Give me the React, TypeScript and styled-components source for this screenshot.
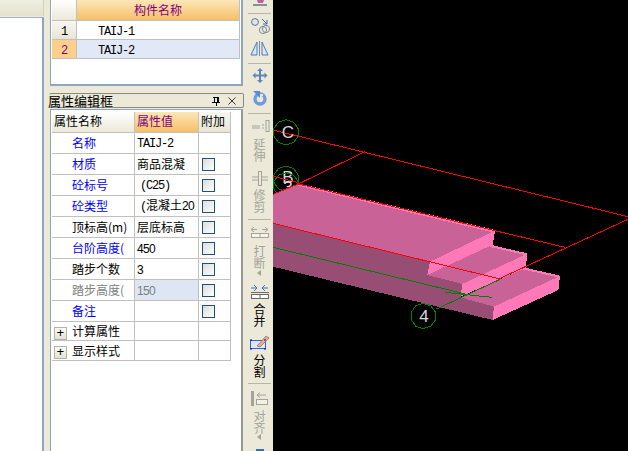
import React from "react";
import styled, { createGlobalStyle } from "styled-components";

const Global = createGlobalStyle`
  html, body { margin: 0; padding: 0; background: #000; overflow: hidden; }
  #root { width: 628px; height: 451px; }
`;

const CJK = `"Noto Sans CJK SC", "Liberation Sans", sans-serif`;
const MONO = `"Liberation Mono", "Noto Sans CJK SC", monospace`;

const Root = styled.div`
  display: flex;
  width: 628px;
  height: 451px;
  overflow: hidden;
  background: #ece9d8;
  font: 12px/14px ${CJK};
  color: #000;
`;

/* left drawer */
const LeftCol = styled.div`
  width: 44px;
  flex: none;
  display: flex;
  flex-direction: column;
`;
const LeftHead = styled.div`
  height: 16px;
  flex: none;
  background: linear-gradient(#f0eee0, #e4e1cd);
  border-right: 1px solid #d4d0bc;
`;
const LeftBody = styled.div`
  flex: 1;
  margin-top: 1px;
  background: #fff;
  border-top: 1px solid #9db3cc;
  border-right: 2px solid #8ea6c2;
`;

/* middle column */
const MiddleCol = styled.div`
  width: 203px;
  flex: none;
  padding-left: 6px;
  box-sizing: border-box;
  display: flex;
  flex-direction: column;
`;
const Panel = styled.div`
  width: 193px;
  box-sizing: border-box;
  background: #fff;
  border-left: 1px solid #8ea6c2;
  border-right: 2px solid #8ea6c2;
  padding-left: 1px;
`;
const TopPanel = styled(Panel)`
  height: 86px;
  flex: none;
  border-bottom: 2px solid #8ea6c2;
`;
const PropPanel = styled(Panel)`
  flex: 1;
  margin-top: 1px;
  border-top: 1px solid #8ea6c2;
  padding-top: 2px;
  border-right-color: #9a9a92;
`;
const TitleBar = styled.div`
  height: 13px;
  width: 194px;
  margin: 7px 0 0 -1px;
  border: 1px solid #8a8a80;
  border-left: none;
  border-radius: 2px;
  display: flex;
  align-items: center;
  font-size: 13px;
  line-height: 13px;
  color: #000;
  background: #ece9d8;
  white-space: nowrap;
`;
const TitleText = styled.span`
  flex: 1;
  margin-left: -1px;
`;
const TitleIcon = styled.svg`
  display: block;
  flex: none;
  width: 10px;
  height: 10px;
  margin-right: 6px;
`;

const Grid = styled.table<{ $w: number }>`
  border-collapse: separate;
  border-spacing: 0;
  table-layout: fixed;
  width: ${(p) => p.$w}px;
`;
const Td = styled.td<{ $h?: number; $bg?: string; $pad?: number; $color?: string; $w?: number; $pt?: number; $pb?: number }>`
  box-sizing: border-box;
  padding: ${(p) => p.$pt ?? 0}px 0 ${(p) => p.$pb ?? 1}px ${(p) => p.$pad ?? 2}px;
  height: ${(p) => p.$h ?? 21}px;
  ${(p) => (p.$w ? `width: ${p.$w}px;` : "")}
  background: ${(p) => p.$bg ?? "#fff"};
  color: ${(p) => p.$color ?? "#000"};
  border-right: 1px solid #c0c0c0;
  border-bottom: 1px solid #c0c0c0;
  white-space: nowrap;
  overflow: hidden;
  vertical-align: middle;
  line-height: 14px;
`;
const Mono = styled.span`
  font-family: ${MONO};
  font-size: 12px;
  letter-spacing: -1.2px;
`;
const Digits = styled.span`
  font-family: "Liberation Sans", sans-serif;
  font-size: 12px;
  letter-spacing: -0.67px;
`;
const Nudge = styled.span`
  padding-left: 3px;
`;
const Check = styled.span`
  display: block;
  width: 13px;
  height: 13px;
  box-sizing: border-box;
  margin-left: 1px;
  border: 1px solid #1c5180;
  background: linear-gradient(135deg, #dcdcd7, #ffffff);
`;
const Plus = styled.span`
  display: inline-flex;
  align-items: center;
  justify-content: center;
  width: 13px;
  height: 13px;
  box-sizing: border-box;
  border: 1px solid #b4b4ae;
  background: linear-gradient(#fbfbf8, #e4e2d4);
  margin: 0 5px 0 2px;
  vertical-align: middle;
  font: 13px/11px "Liberation Mono", monospace;
`;
const Indent = styled.span`
  padding-left: 18px;
`;

/* toolbar */
const Toolbar = styled.div`
  width: 26px;
  flex: none;
  box-sizing: border-box;
  display: flex;
  flex-direction: column;
  align-items: center;
  background: #ece9d8;
  padding-right: 1px;
`;
const Sep = styled.div<{ $mt: number }>`
  width: 23px;
  height: 1px;
  flex: none;
  margin-top: ${(p) => p.$mt}px;
  background: #b8b6a6;
`;
const Ico = styled.svg<{ $mt: number; $h: number }>`
  display: block;
  flex: none;
  width: 24px;
  height: ${(p) => p.$h}px;
  margin-top: ${(p) => p.$mt}px;
`;
const VLabel = styled.div<{ $mt: number; $off?: boolean }>`
  flex: none;
  width: 12px;
  height: 24px;
  word-break: break-all;
  margin-top: ${(p) => p.$mt}px;
  font-size: 12px;
  line-height: 12px;
  color: ${(p) => (p.$off ? "#a4a39a" : "#000")};
`;

/* scene */
const Scene = styled.div`
  flex: 1;
  background: #000;
  min-width: 0;
`;
const SceneSvg = styled.svg`
  display: block;
  width: 355px;
  height: 451px;
`;
const Bubble = styled.text`
  font: 17px "Liberation Sans", sans-serif;
  fill: #d8d8d8;
  text-anchor: middle;
`;

const ORANGE = "linear-gradient(#fde6b8, #f4c066)";
const BEIGE = "linear-gradient(#ffffff, #ece9d8)";
const BEIGE2 = "linear-gradient(#f8f7f0, #e8e5d4)";
const BLUE = "#0000ff";

const rows: { n: string; c: string; v: React.ReactNode; chk: boolean; bg?: string; vc?: string }[] = [
  { n: "名称", c: BLUE, v: <Mono>TAIJ-2</Mono>, chk: false },
  { n: "材质", c: BLUE, v: "商品混凝", chk: true },
  { n: "砼标号", c: BLUE, v: <Nudge><Mono>(C25)</Mono></Nudge>, chk: true },
  { n: "砼类型", c: BLUE, v: <Nudge><Mono>(</Mono>混凝土<Digits>20</Digits></Nudge>, chk: true },
  { n: "顶标高(m)", c: "#000", v: "层底标高", chk: true },
  { n: "台阶高度(", c: BLUE, v: <Digits>450</Digits>, chk: true },
  { n: "踏步个数", c: "#000", v: <Digits>3</Digits>, chk: true },
  { n: "踏步高度(", c: "#808080", v: <Digits>150</Digits>, chk: true, bg: "#dde6f2", vc: "#808080" },
  { n: "备注", c: BLUE, v: "", chk: true },
];

const Oct = ({ cx, cy }: { cx: number; cy: number }) => {
  const r = 38;
  const pts = Array.from({ length: 10 }, (_, i) => {
    const a = (i * Math.PI) / 5 + Math.PI / 10;
    return `${cx + r * Math.cos(a)},${cy + r * Math.sin(a)}`;
  }).join(" ");
  return <polygon points={pts} fill="none" stroke="#008000" strokeWidth={1} vectorEffect="non-scaling-stroke" />;
};

const Line = ({ d, c }: { d: string; c: string }) => (
  <path d={d} fill="none" stroke={c} strokeWidth={1} vectorEffect="non-scaling-stroke" />
);

const D = "#a4a39a";

export default function App() {
  return (
    <Root>
      <Global />
      <LeftCol>
        <LeftHead />
        <LeftBody />
      </LeftCol>
      <MiddleCol>
        <TopPanel>
          <Grid $w={188}>
            <tbody>
              <tr>
                <Td $w={25} $h={21} $bg={BEIGE} />
                <Td $h={21} $bg={ORANGE} $color="#800080" $pad={57}>构件名称</Td>
              </tr>
              <tr>
                <Td $h={19} $bg={BEIGE2} $pad={9} $pt={1} $pb={0}><Mono>1</Mono></Td>
                <Td $h={19} $pad={21} $pt={1} $pb={0}><Mono>TAIJ-1</Mono></Td>
              </tr>
              <tr>
                <Td $h={19} $bg="#fdd08a" $pad={9} $color="#800080" $pt={1} $pb={0}><Mono>2</Mono></Td>
                <Td $h={19} $bg="#e0e9f5" $pad={21} $pt={1} $pb={0}><Mono>TAIJ-2</Mono></Td>
              </tr>
            </tbody>
          </Grid>
        </TopPanel>
        <TitleBar>
          <TitleText>属性编辑框</TitleText>
          <TitleIcon viewBox="0 0 10 10">
            <path d="M2 1h6M3 1v5M6 1v5M7 1v5M1 6h8M5 6v4" stroke="#000" strokeWidth="1" fill="none" shapeRendering="crispEdges" />
          </TitleIcon>
          <TitleIcon viewBox="0 0 10 10">
            <path d="M1.5 1.5l7 7M8.5 1.5l-7 7" stroke="#222" strokeWidth="0.9" fill="none" />
          </TitleIcon>
        </TitleBar>
        <PropPanel>
          <Grid $w={179}>
            <tbody>
              <tr>
                <Td $w={83} $bg={BEIGE} $pb={3}>属性名称</Td>
                <Td $w={64} $bg={ORANGE} $color="#800080" $pb={3}>属性值</Td>
                <Td $w={32} $bg={BEIGE2} $pb={3}>附加</Td>
              </tr>
              {rows.map((r) => (
                <tr key={r.n}>
                  <Td $color={r.c} $pb={0}><Indent>{r.n}</Indent></Td>
                  <Td $bg={r.bg} $color={r.vc} $pb={0}>{r.v}</Td>
                  <Td $pt={1} $pb={0}>{r.chk && <Check />}</Td>
                </tr>
              ))}
              <tr>
                <Td $h={19} $pad={0} $pt={2} $pb={0}><Plus>+</Plus>计算属性</Td>
                <Td $h={19} />
                <Td $h={19} />
              </tr>
              <tr>
                <Td $h={20} $pad={0} $pt={2} $pb={0}><Plus>+</Plus>显示样式</Td>
                <Td $h={20} />
                <Td $h={20} />
              </tr>
            </tbody>
          </Grid>
        </PropPanel>
      </MiddleCol>
      <Toolbar>
        <Ico $mt={0} $h={6} viewBox="0 0 24 6">
          <path d="M9 0h7l-1 3h-5z" fill="#c0609a" />
          <path d="M5 5h14" stroke="#5a6a8a" strokeWidth="1.4" />
        </Ico>
        <Sep $mt={7} />
        <Ico $mt={3} $h={18} viewBox="0 0 24 18">
          <circle cx="7" cy="5" r="3.4" fill="#dfe6f0" stroke="#5b7394" />
          <path d="M14 2l5 5M19 3v4h-4" stroke="#3b6fb8" fill="none" />
          <circle cx="15" cy="13" r="3.6" fill="none" stroke="#7d8a9c" />
          <circle cx="18" cy="12" r="3.6" fill="none" stroke="#7d8a9c" />
        </Ico>
        <Ico $mt={6} $h={15} viewBox="0 0 24 15">
          <path d="M9 1L3 14h6zM14 1l6 13h-6z" fill="#dbe6f4" stroke="#4f7cc0" />
          <path d="M11.5 0v15" stroke="#7a8aa0" />
        </Ico>
        <Sep $mt={7} />
        <Ico $mt={4} $h={15} viewBox="0 0 24 15">
          <path d="M12 0l3 3h-2v3.500h3.500v-2l3 3-3 3v-2H13V12h2l-3 3-3-3h2V8.500H7.500v2l-3-3 3-3v2H11V3H9z" fill="#5f86b8" />
        </Ico>
        <Ico $mt={8} $h={15} viewBox="0 0 24 15">
          <circle cx="12" cy="8" r="5" fill="none" stroke="#6f9ae0" strokeWidth="3.4" />
          <path d="M5 0h7v7z" fill="#5b8bd8" />
          <path d="M12 5h3v-2h-3z" fill="#ece9d8" />
        </Ico>
        <Sep $mt={7} />
        <Ico $mt={6} $h={12} viewBox="0 0 24 12">
          <path d="M4 6h8M4 8h8M14 5h2M14 8h2" stroke={D} fill="none" />
          <rect x="18" y="0.500" width="3" height="11" fill="#ece9d8" stroke={D} />
        </Ico>
        <VLabel $mt={6} $off>延伸</VLabel>
        <Ico $mt={9} $h={15} viewBox="0 0 24 15">
          <path d="M4 6h16M4 9h16" stroke={D} fill="none" />
          <rect x="10.500" y="0.500" width="3" height="14" fill="#ece9d8" stroke={D} />
        </Ico>
        <VLabel $mt={3} $off>修剪</VLabel>
        <Sep $mt={6} />
        <Ico $mt={7} $h={11} viewBox="0 0 24 11">
          <path d="M3 2.500h6M6 0l-3 2.500 3 2.500M20 2.500h-6M17 0l3 2.500-3 2.500" stroke={D} fill="none" />
          <rect x="3.500" y="6.500" width="17" height="4" fill="#f6f5ec" stroke={D} />
          <path d="M12 6v5" stroke={D} />
        </Ico>
        <VLabel $mt={7} $off>打断</VLabel>
        <Ico $mt={1} $h={6} viewBox="0 0 24 6">
          <path d="M9 3l4-3v6z" fill={D} />
        </Ico>
        <Ico $mt={9} $h={14} viewBox="0 0 24 14">
          <path d="M3 3h6M6 0l3 3-3 3M20 3h-6M17 0l-3 3 3 3" stroke="#3b6fd0" fill="none" />
          <path d="M3 7.500h18" stroke="#6a6a6a" />
          <rect x="3.500" y="9.500" width="17" height="4" fill="#fff" stroke="#6a6a6a" />
          <path d="M12 9v5" stroke="#6a6a6a" />
        </Ico>
        <VLabel $mt={4}>合并</VLabel>
        <Ico $mt={7} $h={16} viewBox="0 0 24 16">
          <rect x="2.500" y="6.500" width="15" height="8" fill="#dfe8fa" stroke="#3060e0" />
          <path d="M9 12l9-10 3 2-9 9z" fill="#e8b090" stroke="#8a6a50" strokeWidth="0.7" />
          <path d="M2 15h2M16 6h2M2 6h2M16 15h2" stroke="#0000e0" />
        </Ico>
        <VLabel $mt={4}>分割</VLabel>
        <Sep $mt={5} />
        <Ico $mt={7} $h={15} viewBox="0 0 24 15">
          <rect x="3" y="0" width="3" height="15" fill={D} />
          <path d="M9 4h9M12 1.500L9 4l3 2.500" stroke={D} fill="none" />
          <rect x="8.500" y="8.500" width="11" height="5" fill="#f2f1e6" stroke={D} />
        </Ico>
        <VLabel $mt={4} $off>对齐</VLabel>
        <Ico $mt={0} $h={6} viewBox="0 0 24 6">
          <path d="M9 3l4-3v6z" fill={D} />
        </Ico>
        <Ico $mt={9} $h={3} viewBox="0 0 24 3">
          <path d="M8 0h8v3H8z" fill="#3f6f9a" />
        </Ico>
      </Toolbar>
      <Scene>
        <SceneSvg viewBox="0 0 355 451" shapeRendering="crispEdges">
          <Bubble x={15} y={193}>3</Bubble>
          <Bubble x={15} y={183}>B</Bubble>
          <g transform="translate(-3 110) scale(0.33333)">
            <Oct cx={48} cy={67} />
            <Oct cx={48} cy={206} />
            <Oct cx={48} cy={226} />
            <Oct cx={460} cy={618} />
            {/* dark front faces */}
            <polygon points="9,340 480,455 472,495 577,522 572,560 672,590 668,630 9,470" fill="#984e74" />
            {/* step tops */}
            <polygon points="9,255 85,222 675,362 480,455 9,340" fill="#c96296" />
            <polygon points="664,405 772,431 577,522 472,495" fill="#c96296" />
            <polygon points="765,473 870,498 672,590 575,563" fill="#c96296" />
            {/* light strips and risers */}
            <polygon points="85,220 675,360 672,368 85,227" fill="#ff78b8" />
            <polygon points="675,362 668,404 472,495 480,455" fill="#ff78b8" />
            <polygon points="664,405 772,430 771,436 660,411" fill="#ff78b8" />
            <polygon points="772,431 767,473 572,560 577,522" fill="#ff78b8" />
            <polygon points="765,473 870,497 868,503 758,478" fill="#ff78b8" />
            <polygon points="870,498 865,540 668,630 672,590" fill="#ff78b8" />
            {/* red wireframe */}
            <Line c="#ff0000" d="M9 60L1074 320" />
            <Line c="#ff0000" d="M1074 328L690 505" />
            <Line c="#ff0000" d="M285 125L85 222L9 253" />
            <Line c="#ff0000" d="M85 222L885 412" />
            <Line c="#ff0000" d="M9 340L690 507" />
            <Line c="#ff0000" d="M9 199L85 218" />
            {/* green axes */}
            <Line c="#008000" d="M9 412L590 553" />
            <Line c="#008000" d="M525 547L665 562" />
            <Line c="#008000" d="M500 597L690 508" />
          </g>
          <Bubble x={15} y={138}>C</Bubble>
          <Bubble x={151} y={322}>4</Bubble>
        </SceneSvg>
      </Scene>
    </Root>
  );
}
